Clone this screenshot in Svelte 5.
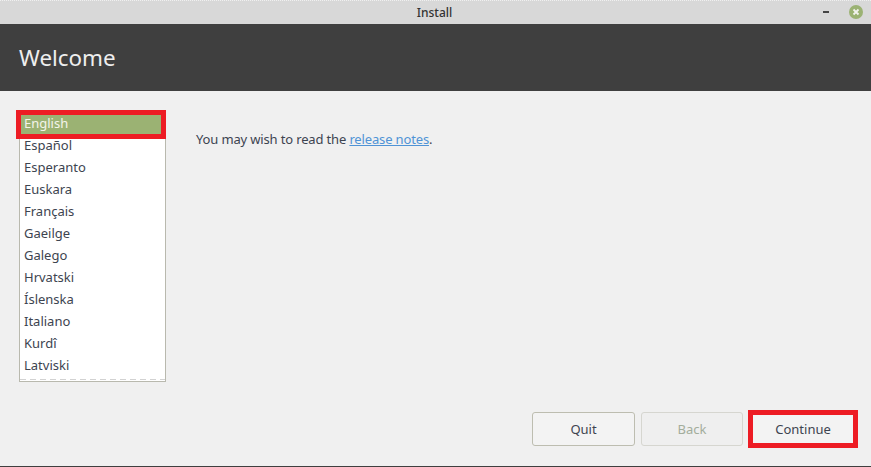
<script>
  const languages = [
    "English", "Español", "Esperanto", "Euskara", "Français", "Gaeilge",
    "Galego", "Hrvatski", "Íslenska", "Italiano", "Kurdî", "Latviski",
  ];
</script>

<div class="window">
  <div class="titlebar">
    <span class="title">Install</span>
    <div class="controls">
      <span class="minimize"></span>
      <svg class="close" width="14" height="14" viewBox="0 0 14 14">
        <circle cx="7" cy="7" r="7" fill="#9bb273" />
        <path d="M4.5 4.5l5 5M9.5 4.5l-5 5" stroke="#f2f2ee" stroke-width="1.8" />
      </svg>
    </div>
  </div>

  <header class="banner">Welcome</header>

  <main class="content">
    <div class="top">
      <ul class="languages">
        {#each languages as lang, i}
          <li class:selected={i === 0}>{lang}</li>
        {/each}
      </ul>
      <p class="notes">You may wish to read the <a href="#notes">release notes</a>.</p>
    </div>

    <div class="buttons">
      <button class="quit">Quit</button>
      <button class="back" disabled>Back</button>
      <button class="continue">Continue</button>
    </div>
  </main>
</div>

<style>
  :global(body) {
    margin: 0;
  }

  .window {
    width: 871px;
    height: 467px;
    display: flex;
    flex-direction: column;
    font-family: "Noto Sans", "Open Sans", sans-serif;
    font-size: 13px;
    color: #3c3c3c;
    border-bottom: 1px solid #3f3f3f;
    box-sizing: border-box;
    overflow: hidden;
  }

  .titlebar {
    height: 24px;
    flex: none;
    position: relative;
    display: flex;
    align-items: center;
    justify-content: center;
    background: #d8d8d8;
    border-top: 1px dotted #f0f0f0;
    box-sizing: border-box;
  }

  .title {
    font-size: 12px;
    font-weight: 500;
    color: #333;
    margin-right: 2px;
  }

  .controls {
    position: absolute;
    right: 8px;
    top: 4px;
    display: flex;
    align-items: center;
    gap: 20px;
  }

  .minimize {
    width: 6px;
    height: 2px;
    background: #444;
  }

  .close {
    display: block;
  }

  .banner {
    height: 67px;
    flex: none;
    box-sizing: border-box;
    padding: 19px 0 0 19px;
    background: #3f3f3f;
    color: #eeeeee;
    font-size: 22.4px;
    line-height: 30px;
  }

  .content {
    flex: 1;
    display: flex;
    flex-direction: column;
    justify-content: space-between;
    background-color: #f0f0f0;
    background-image: radial-gradient(#e9e9e9 0.6px, transparent 0.7px);
    background-size: 4px 4px;
    padding: 24px 18px 20px 19px;
  }

  .top {
    display: flex;
  }

  .languages {
    list-style: none;
    width: 147px;
    height: 267px;
    margin: 0;
    padding: 0;
    box-sizing: border-box;
    /* dashed scroll edge just above the bottom border */
    background: repeating-linear-gradient(90deg, #d2d2d2 0 6px, #fff 6px 10px) left bottom 1px / 100% 1px no-repeat, #fff;
    border: 1px solid #b9b9ae;
    border-top: 0;
  }

  .languages li {
    height: 22px;
    line-height: 22px;
    padding-left: 4px;
    color: #3d4450;
    white-space: nowrap;
  }

  .selected {
    height: 19px !important;
    line-height: 17px !important;
    margin: 0 4px 0 1px;
    padding-left: 3px !important;
    background: #9bb273;
    color: #f4f4ea !important;
    outline: 5px solid #ed1c24;
  }

  .notes {
    margin: 13px 0 0 30px;
    line-height: 22px;
    letter-spacing: -0.15px;
    color: #3d4450;
  }

  .notes a {
    color: #4f93d6;
  }

  .buttons {
    display: flex;
    justify-content: flex-end;
    align-items: center;
  }

  button {
    font: inherit;
    box-sizing: border-box;
    background: #f3f3f3;
    border: 1px solid #bdbdb0;
    border-radius: 3px;
    color: #3d4450;
    height: 34px;
    padding: 0;
  }

  .quit {
    width: 103px;
  }

  .back {
    width: 102px;
    margin-left: 6px;
    border-color: #d6d6d0;
    background: #efefef;
    color: #a3ad9c;
  }

  .continue {
    width: 100px;
    height: 28px;
    margin-left: 10px;
    border: 0;
    border-radius: 0;
    outline: 5px solid #ed1c24;
  }
</style>
